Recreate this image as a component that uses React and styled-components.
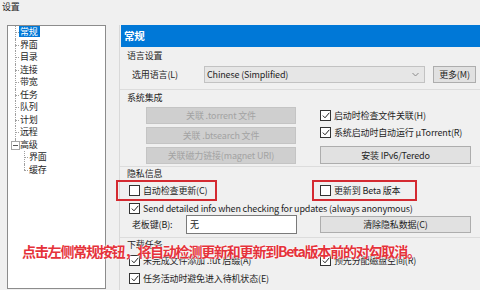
import React from "react";
import styled, { createGlobalStyle } from "styled-components";

const Global = createGlobalStyle`
  html, body { margin: 0; padding: 0; background: #f0f0f0; }
  body {
    font-family: "Noto Sans CJK SC", "Noto Sans", sans-serif;
    font-size: 9px;
    letter-spacing: -0.15px;
    color: #1e1e1e;
  }
`;

const Window = styled.div`
  width: 480px;
  height: 290px;
  overflow: hidden;
  position: relative;
  background: #f0f0f0;
`;

const TitleBar = styled.div`
  height: 25px;
  padding-left: 2px;
  line-height: 14px;
`;

const Body = styled.div`
  display: flex;
  height: 265px;
  padding-left: 7px;
`;

/* ---------- tree ---------- */
const Tree = styled.div`
  height: 262px;
  border: 1px solid #8c8c8c;
  background: #fff;
  padding-left: 7px;
  box-sizing: content-box;
  width: 91px;
`;

const TreeItem = styled.div`
  position: relative;
  height: 12.5px;
  line-height: 12.5px;
  padding-left: ${(p) => (p.$child ? 13 : 4)}px;
  white-space: nowrap;

  &::before {
    content: "";
    position: absolute;
    left: ${(p) => (p.$child ? 9 : 0)}px;
    top: 0;
    height: ${(p) => (p.$last ? "50%" : "100%")};
    border-left: 1px dotted #a0a0a0;
  }
  &::after {
    content: "";
    position: absolute;
    left: ${(p) => (p.$child ? 9 : 0)}px;
    width: 4px;
    top: 6px;
    border-top: 1px dotted #a0a0a0;
  }
`;

const TreeLabel = styled.span`
  padding: 0 2px 0 1px;
  background: ${(p) => (p.$selected ? "#0078d7" : "transparent")};
  color: ${(p) => (p.$selected ? "#fff" : "#1e1e1e")};
  display: inline-block;
  line-height: 11px;
`;

const Expander = styled.span`
  position: absolute;
  left: -4px;
  top: 2px;
  width: 7px;
  height: 7px;
  border: 1px solid #a6a6a6;
  background: #fff;
  z-index: 1;
  &::after {
    content: "";
    position: absolute;
    left: 1px;
    right: 1px;
    top: 3px;
    border-top: 1px solid #555;
  }
`;

/* ---------- right panel ---------- */
const Panel = styled.div`
  margin-left: 13px;
  width: 360px;
  flex-shrink: 0;
  border-left: 1px solid #d9d9d9;
  display: flex;
  flex-direction: column;
`;

const Header = styled.div`
  margin-left: 1px;
  height: 22px;
  line-height: 22px;
  background: #0078d7;
  color: #fff;
  font-weight: bold;
  font-size: 10.5px;
  padding-left: 3px;
`;

const Section = styled.div`
  border-top: ${(p) => (p.$first ? "none" : "1px solid #dcdcdc")};
  padding-left: 7px;
  padding-top: ${(p) => p.$pt || 0}px;
  padding-bottom: ${(p) => p.$pb || 0}px;
  display: flex;
  flex-direction: column;
`;

const SectionTitle = styled.div`
  line-height: 12px;
  height: 12px;
  margin-bottom: ${(p) => p.$mb || 0}px;
`;

const LangRow = styled.div`
  display: flex;
  align-items: center;
  height: 17px;
  padding-left: 5px;
`;

const FieldLabel = styled.span`
  width: ${(p) => p.$w}px;
  flex-shrink: 0;
`;

const Select = styled.div`
  height: 15px;
  border: 1px solid #c2c2c2;
  background: #e6e6e6;
  display: flex;
  align-items: center;
  justify-content: space-between;
  padding: 0 5px 0 2px;
  box-sizing: content-box;
  width: 212px;
`;

const Chevron = styled.svg`
  width: 7px;
  height: 5px;
`;

const Button = styled.div`
  height: ${(p) => p.$h || 17}px;
  width: ${(p) => p.$w}px;
  margin-left: ${(p) => p.$ml || 0}px;
  margin-top: ${(p) => p.$mt || 0}px;
  box-sizing: border-box;
  border: 1px solid ${(p) => (p.$disabled ? "#c4c4c4" : "#adadad")};
  background: ${(p) => (p.$disabled ? "#cfcfcf" : "#e1e1e1")};
  color: ${(p) => (p.$disabled ? "#a3a3a3" : "#1e1e1e")};
  display: flex;
  align-items: center;
  justify-content: center;
  white-space: nowrap;
`;

const TwoCol = styled.div`
  display: grid;
  grid-template-columns: 191px 152px;
  padding-left: 2px;
  align-items: ${(p) => p.$align || "start"};
`;

const Stack = styled.div`
  display: flex;
  flex-direction: column;
  gap: ${(p) => p.$gap || 0}px;
  padding-left: ${(p) => p.$pl || 0}px;
  margin-top: ${(p) => p.$mt || 0}px;
`;

const CheckRow = styled.label`
  display: flex;
  align-items: center;
  height: ${(p) => p.$h || 17}px;
  white-space: nowrap;
  gap: 3px;
`;

const Box = styled.span`
  width: 9px;
  height: 9px;
  border: 1px solid #333;
  background: #fff;
  flex-shrink: 0;
  display: flex;
  align-items: center;
  justify-content: center;
`;

const Highlight = styled.div`
  position: relative;
  height: 21px;
  display: flex;
  align-items: center;
  &::after {
    content: "";
    position: absolute;
    left: ${(p) => p.$l}px;
    width: ${(p) => p.$w}px;
    top: 0;
    height: 21px;
    box-sizing: border-box;
    border: 2px solid #d42a31;
  }
`;

const KeyRow = styled.div`
  display: flex;
  align-items: center;
  height: 19px;
  padding-left: 3px;
`;

const Input = styled.div`
  width: 111px;
  height: 19px;
  box-sizing: border-box;
  border: 1px solid #7a7a7a;
  background: #fff;
  padding-left: 3px;
  line-height: 17px;
`;

const Annotation = styled.div`
  position: absolute;
  left: 22px;
  top: 241px;
  font-family: "Noto Sans CJK SC", sans-serif;
  font-weight: bold;
  font-size: 14px;
  letter-spacing: -1.2px;
  color: #e5323a;
  white-space: nowrap;
  text-shadow: 0 0 2px #fff, 0 0 1px #fff;
`;

function Check({ checked, children, h }) {
  return (
    <CheckRow $h={h}>
      <Box>
        {checked && (
          <svg width="8" height="7" viewBox="0 0 8 7">
            <path d="M0.8 3.6 L3 5.8 L7.3 0.8" fill="none" stroke="#222" strokeWidth="1" />
          </svg>
        )}
      </Box>
      <span>{children}</span>
    </CheckRow>
  );
}

const treeItems = ["常规", "界面", "目录", "连接", "带宽", "任务", "队列", "计划", "远程"];

export default function App() {
  return (
    <>
      <Global />
      <Window>
        <TitleBar>设置</TitleBar>
        <Body>
          <Tree>
            {treeItems.map((t, i) => (
              <TreeItem key={t + i}>
                <TreeLabel $selected={i === 0}>{t}</TreeLabel>
              </TreeItem>
            ))}
            <TreeItem $last>
              <Expander />
              <TreeLabel>高级</TreeLabel>
            </TreeItem>
            <TreeItem $child>
              <TreeLabel>界面</TreeLabel>
            </TreeItem>
            <TreeItem $child $last>
              <TreeLabel>缓存</TreeLabel>
            </TreeItem>
          </Tree>

          <Panel>
            <Header>常规</Header>

            <Section $first $pt={3} $pb={6}>
              <SectionTitle $mb={4}>语言设置</SectionTitle>
              <LangRow>
                <FieldLabel $w={72}>选用语言(L)</FieldLabel>
                <Select>
                  <span>Chinese (Simplified)</span>
                  <Chevron viewBox="0 0 7 5">
                    <path d="M0.5 1 L3.5 4 L6.5 1" fill="none" stroke="#8a8a8a" strokeWidth="1" />
                  </Chevron>
                </Select>
                <Button $w={43} $ml={8}>更多(M)</Button>
              </LangRow>
            </Section>

            <Section $pt={2} $pb={2}>
              <SectionTitle $mb={3}>系统集成</SectionTitle>
              <TwoCol>
                <Stack $gap={3} $pl={17}>
                  <Button $w={150} $disabled>关联 .torrent 文件</Button>
                  <Button $w={150} $disabled>关联 .btsearch 文件</Button>
                  <Button $w={150} $disabled>关联磁力链接(magnet URI)</Button>
                </Stack>
                <Stack>
                  <Check checked>启动时检查文件关联(H)</Check>
                  <Check checked>系统启动时自动运行 µTorrent(R)</Check>
                  <Button $w={151} $h={18} $mt={5}>安装 IPv6/Teredo</Button>
                </Stack>
              </TwoCol>
            </Section>

            <Section $pt={1} $pb={3}>
              <SectionTitle>隐私信息</SectionTitle>
              <TwoCol>
                <Highlight $l={-13} $w={101}>
                  <Check>自动检查更新(C)</Check>
                </Highlight>
                <Highlight $l={-8} $w={105}>
                  <Check>更新到 Beta 版本</Check>
                </Highlight>
              </TwoCol>
              <Stack $pl={2} $mt={1}>
                <Check checked h={13}>Send detailed info when checking for updates (always anonymous)</Check>
              </Stack>
              <TwoCol $align="center">
                <KeyRow>
                  <FieldLabel $w={54}>老板键(B):</FieldLabel>
                  <Input>无</Input>
                </KeyRow>
                <Button $w={151}>清除隐私数据(C)</Button>
              </TwoCol>
            </Section>

            <Section $pt={1}>
              <SectionTitle $mb={1}>下载任务</SectionTitle>
              <TwoCol>
                <Check checked h={17}>未完成文件添加 .!ut 后缀(A)</Check>
                <Check checked h={17}>预先分配磁盘空间(R)</Check>
              </TwoCol>
              <Stack $pl={2}>
                <Check checked h={19}>任务活动时避免进入待机状态(E)</Check>
              </Stack>
            </Section>
          </Panel>
        </Body>
        <Annotation>点击左侧常规按钮，将自动检测更新和更新到Beta版本前的对勾取消。</Annotation>
      </Window>
    </>
  );
}
